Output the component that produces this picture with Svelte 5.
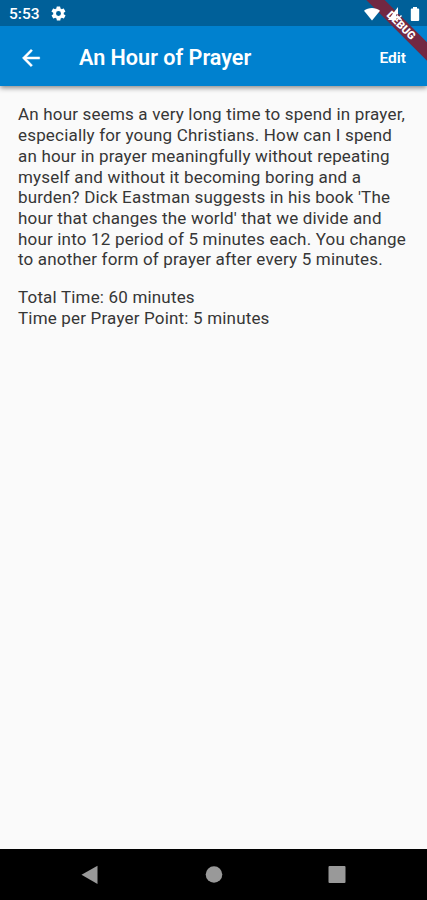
<script>
  const title = 'An Hour of Prayer';
  const totalTime = 60;
  const timePerPoint = 5;

  const description = [
    'An hour seems a very long time to spend in prayer,',
    'especially for young Christians. How can I spend',
    'an hour in prayer meaningfully without repeating',
    'myself and without it becoming boring and a',
    "burden? Dick Eastman suggests in his book 'The",
    "hour that changes the world' that we divide and",
    'hour into 12 period of 5 minutes each. You change',
    'to another form of prayer after every 5 minutes.'
  ];
</script>

<div class="screen">
  <header>
    <div class="status-bar">
      <span class="clock">5:53</span>
      <svg class="gear" viewBox="0 0 24 24" width="17" height="17">
        <path fill="#fff" fill-rule="evenodd" d="M19.4 13a7.5 7.5 0 0 0 0-2l2.1-1.6c.2-.2.2-.4.1-.6l-2-3.5c-.1-.2-.4-.3-.6-.2l-2.5 1a7.3 7.3 0 0 0-1.7-1l-.4-2.7a.5.5 0 0 0-.5-.4h-4a.5.5 0 0 0-.5.4L9 5.1a7.7 7.7 0 0 0-1.7 1l-2.5-1c-.2-.1-.5 0-.6.2l-2 3.5c-.1.2-.1.5.1.6L4.6 11a7.9 7.9 0 0 0 0 2l-2.1 1.6c-.2.2-.3.4-.1.6l2 3.5c.1.2.4.3.6.2l2.5-1c.5.4 1.1.7 1.7 1l.4 2.7c0 .2.2.4.5.4h4c.3 0 .5-.2.5-.4l.4-2.7c.6-.3 1.2-.6 1.7-1l2.5 1c.2.1.5 0 .6-.2l2-3.5c.1-.2.1-.5-.1-.6zM12 8.500a3.500 3.500 0 1 0 0 7 3.500 3.500 0 0 0 0-7z" />
      </svg>
      <div class="indicators">
        <svg viewBox="0 0 18 14" width="18" height="14">
          <path fill="#fff" d="M9 13.5 1 3.7C3.2 1.9 6 .9 9 .9s5.800 1 8 2.800z" />
        </svg>
        <svg viewBox="0 0 17 16" width="17" height="16">
          <path fill="#fff" d="M11 1v7.5H9v5.5H1z" />
          <path d="m10 9.500 4.500 4.500m0-4.500-4.500 4.500" stroke="#fff" stroke-width="1.400" />
        </svg>
        <svg viewBox="0 0 10 16" width="10" height="16">
          <path fill="#fff" d="M3 1h4v1.500h1.300c.5 0 .9.400.9.900v10.700c0 .5-.4.900-.9.900H1.700a.9.900 0 0 1-.9-.9V3.400c0-.5.4-.9.900-.9H3z" />
        </svg>
      </div>
    </div>
    <div class="app-bar">
      <button class="back" aria-label="Back">
        <svg viewBox="0 0 24 24" width="26" height="26">
          <path fill="#fff" stroke="#fff" stroke-width=".4" d="M20 11H7.83l5.59-5.59L12 4l-8 8 8 8 1.41-1.41L7.83 13H20z" />
        </svg>
      </button>
      <h1>{title}</h1>
      <button class="edit">Edit</button>
    </div>
    <div class="banner-clip">
      <div class="debug-banner">DEBUG</div>
    </div>
  </header>

  <main>
    <p>
      {#each description as line}
        <span class="line">{line}</span>
      {/each}
    </p>
    <p>
      <span class="line">Total Time: {totalTime} minutes</span>
      <span class="line">Time per Prayer Point: {timePerPoint} minutes</span>
    </p>
  </main>

  <nav>
    <svg viewBox="0 0 20 20" width="20" height="20">
      <path fill="#999" d="M16.5.7V19L.5 9.800z" />
    </svg>
    <svg viewBox="0 0 20 20" width="20" height="20">
      <circle cx="10" cy="9.5" r="8.3" fill="#999" />
    </svg>
    <svg viewBox="0 0 20 20" width="20" height="20">
      <rect x="1.5" y="1" width="17" height="17" rx="1" fill="#999" />
    </svg>
  </nav>
</div>

<style>
  :global(body) {
    margin: 0;
  }

  .screen {
    display: flex;
    flex-direction: column;
    height: 900px;
    background: #fafafa;
    font-family: Roboto, "Liberation Sans", sans-serif;
    overflow: hidden;
  }

  svg {
    display: block;
  }

  header {
    position: relative;
    z-index: 1;
    flex: none;
    height: 86px;
    color: #fff;
    background: #0081cf;
    box-shadow: 0 2px 5px rgba(0, 0, 0, 0.45);
  }

  .status-bar {
    display: flex;
    align-items: center;
    box-sizing: border-box;
    height: 26px;
    padding: 1px 7px 0 9px;
    background: #006099;
  }

  .clock {
    width: 41px;
    font-size: 15.5px;
    font-weight: 500;
  }

  /* system icons stay above the debug ribbon */
  .indicators {
    position: relative;
    z-index: 1;
    display: flex;
    align-items: center;
    gap: 6px;
    margin-left: auto;
  }

  .app-bar {
    display: flex;
    align-items: center;
    height: 63px;
    padding: 0 21px 0 18px;
  }

  button {
    padding: 0;
    border: none;
    background: none;
    color: inherit;
    font: inherit;
  }

  .back {
    width: 61px;
  }

  h1 {
    flex: 1;
    margin: 0;
    font-size: 21.6px;
    font-weight: 600;
    white-space: nowrap;
  }

  .edit {
    font-size: 15.5px;
    font-weight: 600;
  }

  .banner-clip {
    position: absolute;
    top: 0;
    right: 0;
    width: 86px;
    height: 86px;
    overflow: hidden;
  }

  .debug-banner {
    position: absolute;
    top: 19px;
    right: -34px;
    width: 120px;
    height: 13px;
    background: #722842;
    font-size: 11px;
    font-weight: 900;
    line-height: 13px;
    text-align: center;
    transform: rotate(45deg);
  }

  main {
    flex: 1;
    padding: 18.4px 18px;
    color: #363636;
  }

  p {
    margin: 0 0 17px;
    font-size: 17px;
    line-height: 20.7px;
    letter-spacing: 0.18px;
  }

  .line {
    display: block;
    white-space: nowrap;
  }

  nav {
    display: flex;
    flex: none;
    align-items: center;
    justify-content: center;
    gap: 103px;
    height: 51px;
    background: #000;
  }
</style>
